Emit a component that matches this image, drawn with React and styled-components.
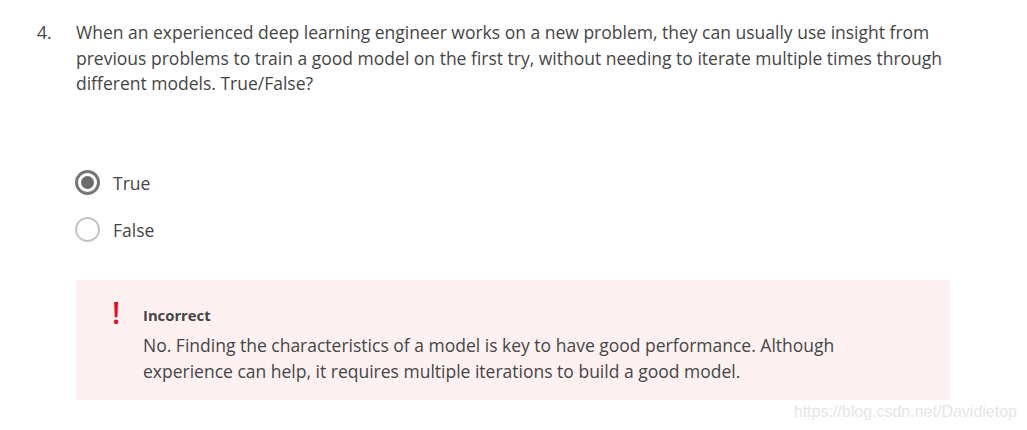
import React from "react";
import styled, { createGlobalStyle } from "styled-components";

const Global = createGlobalStyle`
  html, body { margin: 0; padding: 0; background: #fff; }
  body { font-family: "Open Sans", "Liberation Sans", sans-serif; color: #444; }
`;

const Page = styled.div`
  position: relative;
  width: 1027px;
  height: 430px;
  overflow: hidden;
  padding: 20px 0 0 37px;
  box-sizing: border-box;
`;

const Question = styled.div`
  display: flex;
  font-size: 17.5px;
  line-height: 25.5px;
  color: #454545;
`;

const Number = styled.div`
  width: 39px;
  flex: none;
`;

const QText = styled.div`
  width: 900px;
`;

const Options = styled.div`
  display: flex;
  flex-direction: column;
  gap: 21px;
  margin: 73px 0 0 38px;
`;

const Option = styled.label`
  display: flex;
  align-items: center;
  gap: 13px;
  font-size: 17.5px;
  color: #454545;
  height: 26px;
`;

const Radio = styled.span`
  width: 25px;
  height: 25px;
  box-sizing: border-box;
  border-radius: 50%;
  border: ${p => (p.$checked ? "3px solid #757575" : "2px solid #c4c4c4")};
  display: flex;
  align-items: center;
  justify-content: center;
  &::after {
    content: "";
    display: ${p => (p.$checked ? "block" : "none")};
    width: 13px;
    height: 13px;
    border-radius: 50%;
    background: #6b6b6b;
  }
`;

const Feedback = styled.div`
  margin: 37px 0 0 39px;
  width: 874px;
  height: 120px;
  box-sizing: border-box;
  background: #fdf1f2;
  display: flex;
  padding: 20px 0 0 36px;
`;

const Mark = styled.div`
  width: 31px;
  flex: none;
  color: #e0101e;
  font-size: 30px;
  font-weight: 600;
  line-height: 30px;
  margin-top: -2px;
`;

const FBody = styled.div`
  display: flex;
  flex-direction: column;
`;

const Title = styled.div`
  font-size: 14.8px;
  font-weight: 700;
  color: #444;
  line-height: 20px;
  margin-top: 5px;
`;

const FText = styled.div`
  font-size: 17.5px;
  line-height: 26px;
  color: #454545;
  margin-top: 7px;
`;

const Watermark = styled.div`
  position: absolute;
  right: 10px;
  bottom: 9px;
  font-family: "Liberation Sans", Arial, sans-serif;
  font-size: 16px;
  color: #e6e6e6;
`;

export default function App() {
  return (
    <>
      <Global />
      <Page>
        <Question>
          <Number>4.</Number>
          <QText>
            When an experienced deep learning engineer works on a new problem, they can usually use insight from
            <br />
            previous problems to train a good model on the first try, without needing to iterate multiple times through
            <br />
            different models. True/False?
          </QText>
        </Question>
        <Options>
          <Option>
            <Radio $checked />
            True
          </Option>
          <Option>
            <Radio />
            False
          </Option>
        </Options>
        <Feedback>
          <Mark>!</Mark>
          <FBody>
            <Title>Incorrect</Title>
            <FText>
              No. Finding the characteristics of a model is key to have good performance. Although
              <br />
              experience can help, it requires multiple iterations to build a good model.
            </FText>
          </FBody>
        </Feedback>
        <Watermark>https://blog.csdn.net/Davidietop</Watermark>
      </Page>
    </>
  );
}
